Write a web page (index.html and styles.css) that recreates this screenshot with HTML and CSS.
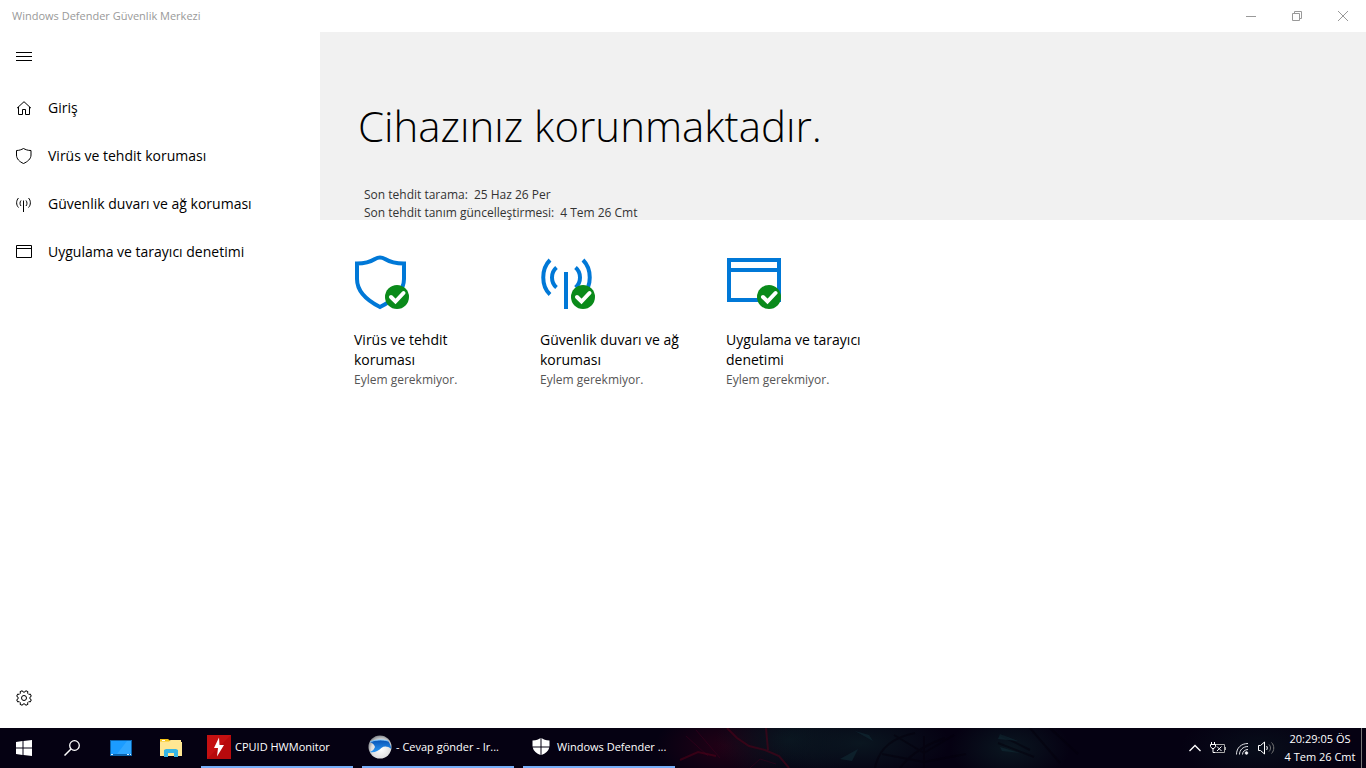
FILE: index.html
```
<!DOCTYPE html>
<html lang="tr">

<head>
    <meta charset="UTF-8">
    <meta name="viewport" content="width=device-width, initial-scale=1.0">
    <title>Windows Defender Güvenlik Merkezi</title>
    <link rel="stylesheet" href="styles.css">
</head>

<body>
    <header class="titlebar">
        <span class="titlebar-text">Windows Defender Güvenlik Merkezi</span>
        <div class="window-buttons">
            <button type="button" aria-label="Simge durumuna küçült">
                <svg width="10" height="10" viewBox="0 0 10 10"><path d="M0 5.5h10" /></svg>
            </button>
            <button type="button" aria-label="Önceki boyut">
                <svg width="10" height="10" viewBox="0 0 10 10"><path d="M.5 2.5h7v7h-7zM2.5 2.500v-2h7v7h-2" /></svg>
            </button>
            <button type="button" aria-label="Kapat">
                <svg width="10" height="10" viewBox="0 0 10 10"><path d="M0 0l10 10M10 0L0 10" /></svg>
            </button>
        </div>
    </header>

    <div class="window">
        <nav class="sidebar">
            <button type="button" class="nav-item menu-btn" aria-label="Menü">
                <svg width="16" height="16" viewBox="0 0 16 16"><path d="M0 4.500h16M0 8.500h16M0 12.500h16" /></svg>
            </button>
            <a href="#" class="nav-item">
                <svg width="16" height="16" viewBox="0 0 16 16"><path d="M1 8.200L8 1.700l7 6.500M2.500 7v7.500h4v-5h3v5h4V7" /></svg>
                Giriş
            </a>
            <a href="#" class="nav-item">
                <svg width="16" height="16" viewBox="0 0 16 16"><path d="M.5 2.500C3.500 2.500 5.500 1.500 7.500.5c2 1 4 2 7.500 2V7c0 4-3.500 6.700-7.500 8.500C3.500 13.700.5 11 .5 7z" /></svg>
                Virüs ve tehdit koruması
            </a>
            <a href="#" class="nav-item">
                <svg width="16" height="16" viewBox="0 0 16 16"><path d="M7.500 4.500V16M5 4.500c-1.300 1.500-1.300 4 0 5.500M10 4.500c1.300 1.500 1.300 4 0 5.500M2.500 2C0 4.500 0 9 2.500 11.500M12.500 2c2.500 2.500 2.500 7 0 9.500" /></svg>
                Güvenlik duvarı ve ağ koruması
            </a>
            <a href="#" class="nav-item">
                <svg width="16" height="16" viewBox="0 0 16 16"><path d="M.5 1.500h15v12H.5zM.5 4.500h15" /></svg>
                Uygulama ve tarayıcı denetimi
            </a>
            <button type="button" class="nav-item settings-btn" aria-label="Ayarlar">
                <svg width="16" height="16" viewBox="-8 -8 16 16">
                    <path d="M5.930.890L7.290 1.750 6.390 3.920 4.820 3.570 3.570 4.820 3.920 6.390 1.750 7.290.890 5.930-.890 5.930-1.750 7.290-3.920 6.390-3.570 4.820-4.820 3.570-6.390 3.920-7.290 1.750-5.930.890-5.930-.890-7.290-1.750-6.390-3.920-4.820-3.570-3.570-4.820-3.920-6.390-1.750-7.290-.890-5.930.890-5.930 1.750-7.290 3.920-6.390 3.570-4.820 4.820-3.570 6.390-3.920 7.290-1.750 5.930-.890z" />
                    <circle r="2.500" />
                </svg>
            </button>
        </nav>

        <main class="content">
            <section class="hero">
                <h1>Cihazınız korunmaktadır.</h1>
                <dl class="scan-info">
                    <div><dt>Son tehdit tarama:</dt><dd>25 Haz 26 Per</dd></div>
                    <div><dt>Son tehdit tanım güncelleştirmesi:</dt><dd>4 Tem 26 Cmt</dd></div>
                </dl>
            </section>

            <section class="cards">
                <a href="#" class="card">
                    <svg class="card-icon" width="56" height="56" viewBox="0 0 56 56">
                        <path d="M3 8.500c9 0 14-2 18-4.500 3.500-2 6.500-2 10 0 4 2.500 9 4.500 19 4.500V24c0 12-10 21-24 28C12 45 3 36 3 24z" />
                        <g class="badge"><circle cx="43" cy="42" r="12" /><path d="M37 42l4.500 4.500L49.500 38" /></g>
                    </svg>
                    <h2>Virüs ve tehdit koruması</h2>
                    <p>Eylem gerekmiyor.</p>
                </a>
                <a href="#" class="card">
                    <svg class="card-icon" width="56" height="56" viewBox="0 0 56 56">
                        <path d="M26 17v37M16.500 12.500c-6 5-6 15 0 20M35.500 12.500c6 5 6 15 0 20M10 5C1 14 1 31 10 39.500M43 5c9 9 9 26 0 34.500" />
                        <g class="badge"><circle cx="43" cy="42" r="12" /><path d="M37 42l4.500 4.500L49.500 38" /></g>
                    </svg>
                    <h2>Güvenlik duvarı ve ağ koruması</h2>
                    <p>Eylem gerekmiyor.</p>
                </a>
                <a href="#" class="card">
                    <svg class="card-icon" width="56" height="56" viewBox="0 0 56 56">
                        <path d="M3 5h50v40H3zM3 15h50" />
                        <g class="badge"><circle cx="43" cy="42" r="12" /><path d="M37 42l4.500 4.500L49.500 38" /></g>
                    </svg>
                    <h2>Uygulama ve tarayıcı denetimi</h2>
                    <p>Eylem gerekmiyor.</p>
                </a>
            </section>
        </main>
    </div>

    <footer class="taskbar">
        <!-- wallpaper showing through the bar -->
        <svg class="wallpaper" viewBox="0 0 1366 40" preserveAspectRatio="none">
            <defs>
                <radialGradient id="glow"><stop offset="0" stop-color="#360018" /><stop offset="1" stop-color="#360018" stop-opacity="0" /></radialGradient>
                <radialGradient id="mist"><stop offset="0" stop-color="#0a1620" /><stop offset="1" stop-color="#0a1620" stop-opacity="0" /></radialGradient>
            </defs>
            <ellipse cx="725" cy="18" rx="70" ry="38" fill="url(#glow)" opacity=".6" />
            <ellipse cx="790" cy="12" rx="75" ry="40" fill="url(#mist)" />
            <ellipse cx="860" cy="15" rx="90" ry="35" fill="url(#mist)" />
            <ellipse cx="1010" cy="20" rx="60" ry="35" fill="url(#mist)" />
            <ellipse cx="1260" cy="20" rx="80" ry="35" fill="url(#mist)" opacity=".6" />
            <path d="M727 0l10 10 12 8 16 4 14 6 10 12M766 0l2 22M680 32l18-8 18 4" fill="none" stroke="#5a0018" stroke-width="2" opacity=".5" />
            <path d="M686 8l22 20M696 2l24 28M750 40l10-9 16 5" fill="none" stroke="#4a0020" opacity=".4" />
            <path d="M875 40q5-28 40-35M900 40q15-20 45-30M924 40V8M924 25l-30-18M924 25l30-18M924 34l-42-8M924 34l42-8M1000 7l30 15M998 15l36 14M1030 0l30 35M1050 0l28 26" fill="none" stroke="#03000c" stroke-width="2" opacity=".5" />
            <path d="M840 31l18-10-6 12zM855 3l14 4 4 6zM1000 6l18 7-20-2zM1000 19l20 6-18-2z" fill="#12303a" opacity=".5" />
        </svg>
        <button type="button" class="task-icon" aria-label="Başlat">
            <svg width="16" height="16" viewBox="0 0 16 16"><path fill="#fff" d="M0 2l6.500-.9v6.400H0zM7.500 1L16 0v7.500H7.500zM0 8.500h6.500v6.400L0 14zM7.500 8.500H16V16l-8.500-1z" /></svg>
        </button>
        <button type="button" class="task-icon" aria-label="Ara">
            <svg width="16" height="16" viewBox="0 0 16 16"><circle cx="10.500" cy="5.500" r="4.800" fill="none" stroke="#fff" stroke-width="1.300" /><path d="M7 9L.5 15.500" stroke="#fff" stroke-width="1.500" /></svg>
        </button>
        <button type="button" class="task-icon pinned" aria-label="Masaüstü">
            <svg width="22" height="16" viewBox="0 0 22 16">
                <path fill="#0b62aa" d="M0 0h22v16H0z" /><path fill="#1b9cff" d="M1 1h20v13H1z" /><path fill="#40afff" d="M17 1h4v13H7z" opacity=".6" /><path fill="#d8efff" d="M1 14h2v1H1zM17 14h2v1h-2zM20 14h1v1h-1z" />
            </svg>
        </button>
        <button type="button" class="task-icon pinned" aria-label="Dosya Gezgini">
            <svg width="22" height="18" viewBox="0 0 22 18">
                <path fill="#f5c518" d="M0 0h8l2 1.500V5H0z" /><path fill="#ffe793" d="M0 2.500h9L10.500 1H21v2h1v14H0V3z" /><path fill="#fff" d="M2 1h3v1H2z" /><path fill="#37b6e4" d="M4 18v-7l2-1h10l2 1v7h-4v-4H8v4z" />
            </svg>
        </button>
        <div class="tasks">
            <button type="button" class="task">
                <svg width="24" height="24" viewBox="0 0 24 24">
                    <path fill="#b70a0c" d="M0 0h24v24H0z" /><path fill="#d11616" d="M0 0h24L0 24z" opacity=".5" /><path fill="#fff" d="M12 2.500L7 13h4l-1 8.500L17 10h-4.500z" />
                </svg>
                <span>CPUID HWMonitor</span>
            </button>
            <button type="button" class="task">
                <svg width="24" height="24" viewBox="0 0 24 24">
                    <defs>
                        <radialGradient id="silver" cx=".55" cy=".6" r=".6"><stop offset="0" stop-color="#fff" /><stop offset=".7" stop-color="#dedede" /><stop offset="1" stop-color="#85888d" /></radialGradient>
                        <linearGradient id="blue" x2="0" y2="1"><stop offset="0" stop-color="#0753b5" /><stop offset="1" stop-color="#2b98f5" /></linearGradient>
                    </defs>
                    <circle cx="12" cy="12" r="11.500" fill="url(#silver)" />
                    <path fill="url(#blue)" d="M2 7c4-2 12-3 18-1 2 2 3 5 3.300 8-4-3-7-3-10-1-3 3-7 5-11.300 4 3-1 4-3 5-5C6 9 4 8 2 7z" />
                    <path d="M2 7c4-2 12-3 18-1" fill="none" stroke="#7cc4fb" stroke-width="1" />
                </svg>
                <span>- Cevap gönder - Ir...</span>
            </button>
            <button type="button" class="task">
                <svg width="24" height="24" viewBox="0 0 24 24">
                    <path fill="#fff" d="M3.500 5.500c4 0 6-1 8-2.500v8.500h-8zM12.500 3c2 1.500 4 2.500 8 2.500v6h-8zM3.700 12.500h7.800V20c-4-1.500-7-4-7.800-7.500zM12.500 12.500h7.800c-.8 3.500-3.800 6-7.800 7.500z" />
                </svg>
                <span>Windows Defender ...</span>
            </button>
        </div>
        <div class="tray">
            <button type="button" aria-label="Gizli simgeleri göster">
                <svg width="14" height="16" viewBox="0 0 14 16"><path d="M1.500 11L7 5.500l5.500 5.500" fill="none" stroke="#fff" stroke-width="1.300" /></svg>
            </button>
            <button type="button" aria-label="Pil">
                <svg width="16" height="16" viewBox="0 0 16 16" fill="none" stroke="#fff">
                    <path d="M5 4.500h9.500v8H5" stroke="#aaa" /><path d="M15.500 7v3" stroke="#aaa" /><path d="M.5 4.500h5v2L4 8.500H2L.5 6.500zM1.500 2v2M4.500 2v2M3 8.500v4h2M7 6.500l4.500 4.500M11.500 6.500L7 11" />
                </svg>
            </button>
            <button type="button" aria-label="Ağ">
                <svg width="16" height="16" viewBox="0 0 16 16" fill="none" stroke="#e4e4e8">
                    <path d="M2.500 14.500C2.500 8 7 3.500 14 3.500M5.500 14.500C5.500 10 9 6.500 14 6.500M8.500 14.500c0-3 2.500-5 5.500-5" /><circle cx="12.500" cy="13" r="1.300" fill="#fff" />
                </svg>
            </button>
            <button type="button" aria-label="Ses">
                <svg width="17" height="16" viewBox="0 0 17 16" fill="none" stroke="#fff">
                    <path d="M.5 5.500h2L6.500 2v12l-4-3.500h-2z" /><path d="M8.500 6c1 1 1 3 0 4" /><path d="M11 4.500c2 2 2 5 0 7M13.500 2.500c3 3 3 8 0 11" stroke="#777" />
                </svg>
            </button>
            <button type="button" class="clock">
                <time>20:29:05 ÖS</time>
                <time>4 Tem 26 Cmt</time>
            </button>
            <button type="button" class="show-desktop" aria-label="Masaüstünü göster"></button>
        </div>
    </footer>
</body>

</html>
```
FILE: styles.css
```
* {
    box-sizing: border-box;
}

body {
    margin: 0;
    min-height: 100vh;
    display: flex;
    flex-direction: column;
    font-family: "Open Sans", "Noto Sans", sans-serif;
    font-size: 14px;
    line-height: 20px;
    color: #000;
    background-color: #fff;
}

h1,
h2,
p,
dl,
dd {
    margin: 0;
    font-weight: normal;
}

button {
    padding: 0;
    border: none;
    background: none;
    font: inherit;
    color: inherit;
}

a {
    color: inherit;
    text-decoration: none;
}

svg {
    flex-shrink: 0;
}

/* title bar */
.titlebar {
    display: flex;
    justify-content: space-between;
    align-items: center;
    height: 32px;
    padding-left: 12px;
    font-size: 11px;
    color: #999;
}

.window-buttons {
    display: flex;
    height: 100%;
}

.window-buttons button {
    display: flex;
    align-items: center;
    justify-content: center;
    width: 46px;
}

.window-buttons svg {
    fill: none;
    stroke: #999;
}

/* sidebar */
.window {
    flex: 1;
    display: flex;
}

.sidebar {
    display: flex;
    flex-direction: column;
    width: 320px;
    padding-bottom: 6px;
}

.nav-item {
    display: flex;
    align-items: center;
    gap: 16px;
    height: 48px;
    padding: 0 16px;
}

.nav-item svg {
    fill: none;
    stroke: #000;
}

.menu-btn {
    margin-bottom: 4px;
}

.settings-btn {
    margin-top: auto;
}

/* content */
.content {
    flex: 1;
}

.hero {
    padding: 62px 38px 0;
    background-color: #f1f1f1;
}

.hero h1 {
    font-size: 42px;
    font-weight: 300;
    line-height: 64px;
}

.scan-info {
    margin-top: 28px;
    height: 34px;
    padding-left: 6px;
    font-size: 12px;
    line-height: 18px;
    color: #333;
}

.scan-info div {
    display: flex;
    gap: 6px;
}

.cards {
    display: flex;
    flex-wrap: wrap;
    gap: 36px;
    padding: 35px 34px;
}

.card {
    width: 150px;
}

.card-icon {
    display: block;
    margin-bottom: 19px;
    fill: none;
    stroke: #0078d7;
    stroke-width: 4;
}

.badge circle {
    fill: #0a8a1a;
    stroke: none;
}

.badge path {
    stroke: #fff;
    stroke-linecap: round;
}

.card h2 {
    font-size: 14px;
}

.card p {
    font-size: 12px;
    color: #555;
}

/* taskbar */
.taskbar {
    position: relative;
    display: flex;
    height: 40px;
    font-size: 11px;
    color: #fff;
    background-color: #050112;
}

.wallpaper {
    position: absolute;
    width: 100%;
    height: 100%;
}

.taskbar button {
    position: relative;
    display: flex;
    align-items: center;
}

.taskbar .task-icon {
    justify-content: center;
    width: 48px;
}

.taskbar .pinned {
    width: 50px;
}

.tasks {
    display: flex;
    gap: 9px;
    margin-left: 5px;
}

.taskbar .task {
    gap: 4px;
    width: 152px;
    padding-left: 6px;
    border-bottom: 2px solid #76aef8;
    white-space: nowrap;
}

.tray {
    display: flex;
    gap: 8px;
    margin-left: auto;
}

.taskbar .clock {
    flex-direction: column;
    justify-content: center;
    min-width: 74px;
    line-height: 18px;
}

.taskbar .show-desktop {
    width: 5px;
    margin-left: -4px;
    border-left: 1px solid #777;
}
```
